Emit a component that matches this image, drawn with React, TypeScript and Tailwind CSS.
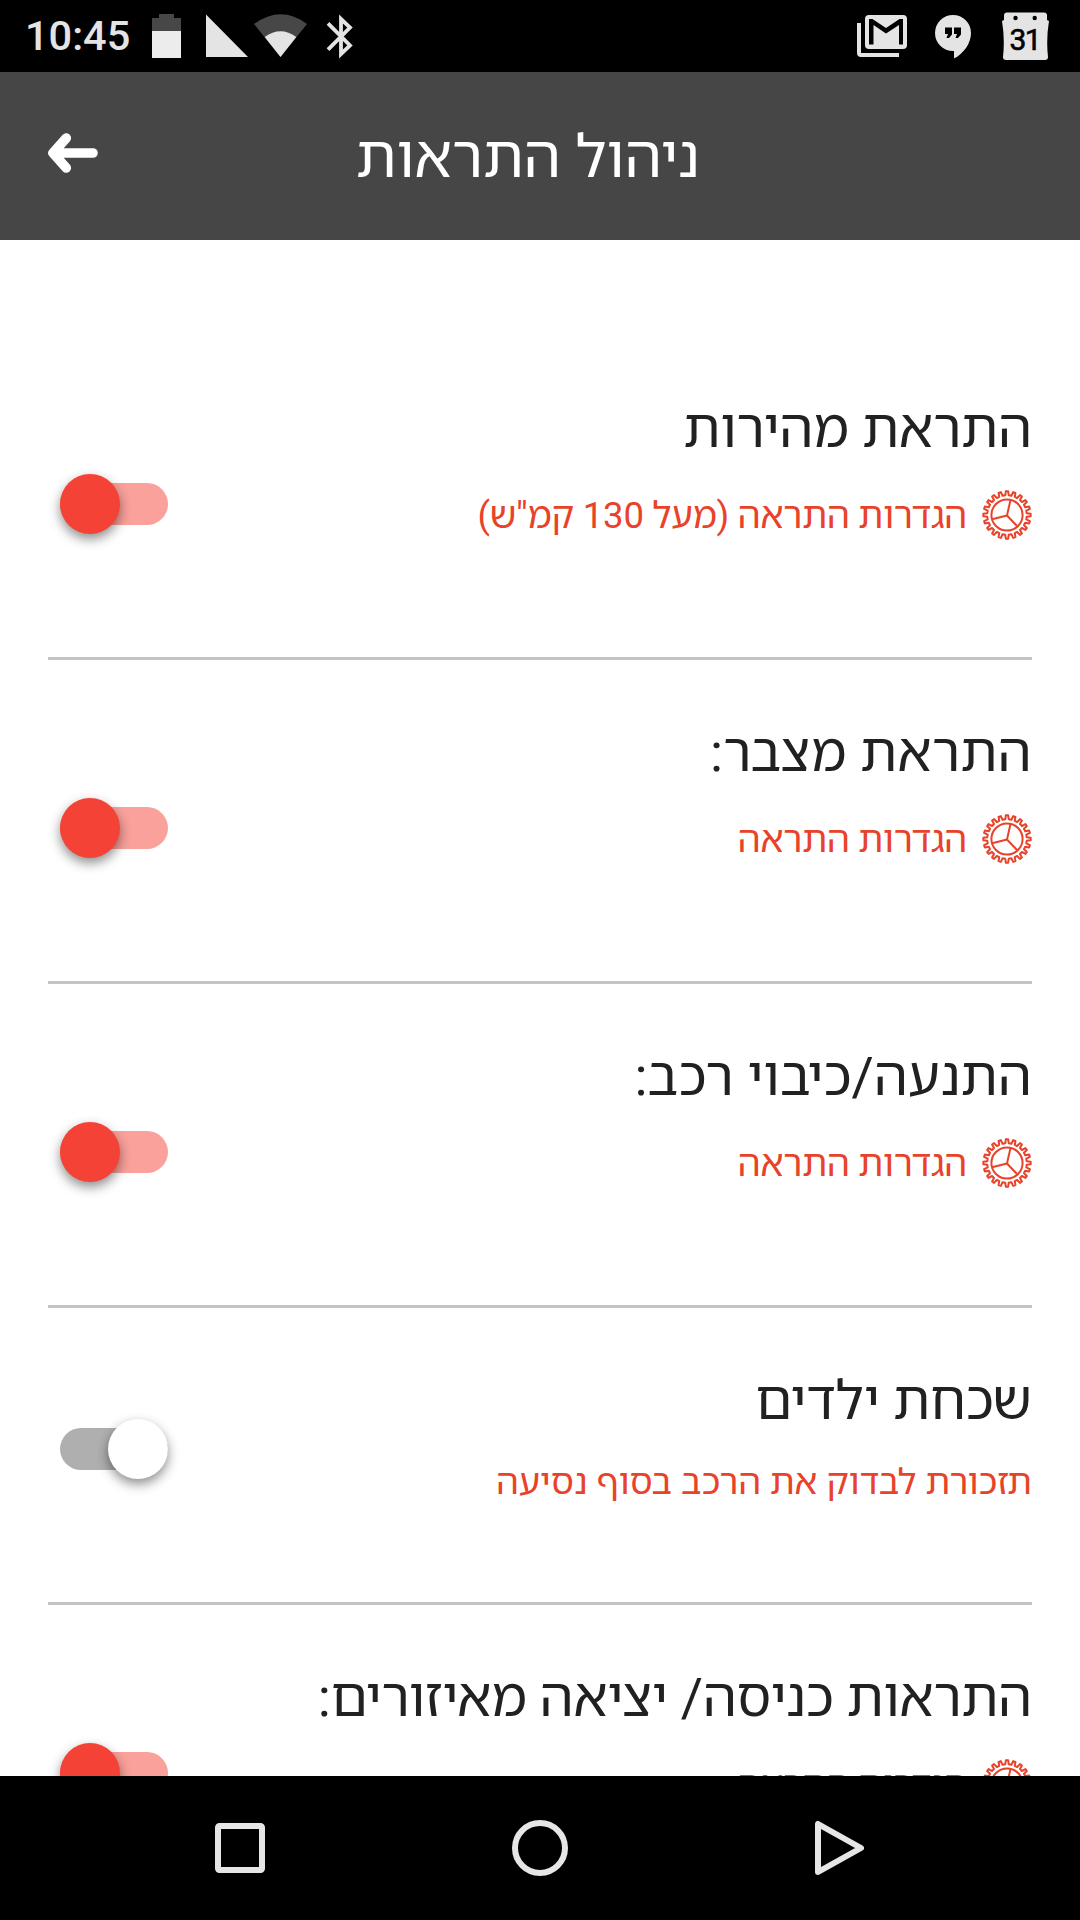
import { useState } from 'react';

interface Alert {
  id: string;
  title: string;
  subtitle: string;
  hasSettings: boolean;
  enabled: boolean;
  tracking: string;
}

const initialAlerts: Alert[] = [
  { id: 'speed', title: 'התראת מהירות', subtitle: 'הגדרות התראה (מעל 130 קמ"ש)', hasSettings: true, enabled: true, tracking: 'tracking-[-0.08px]' },
  { id: 'battery', title: 'התראת מצבר:', subtitle: 'הגדרות התראה', hasSettings: true, enabled: true, tracking: 'tracking-[0.3px]' },
  { id: 'ignition', title: 'התנעה/כיבוי רכב:', subtitle: 'הגדרות התראה', hasSettings: true, enabled: true, tracking: 'tracking-[0.15px]' },
  { id: 'children', title: 'שכחת ילדים', subtitle: 'תזכורת לבדוק את הרכב בסוף נסיעה', hasSettings: false, enabled: false, tracking: 'tracking-normal' },
  { id: 'zones', title: 'התראות כניסה/ יציאה מאיזורים:', subtitle: 'הגדרות התראה', hasSettings: true, enabled: true, tracking: 'tracking-[-0.2px]' },
];

// Outline of the cog: each tooth is a short run on the outer radius
const TEETH = 20;
const gearPoints = Array.from({ length: TEETH }, (_, i) => {
  const step = (Math.PI * 2) / TEETH;
  const a = i * step - Math.PI / 2;
  return [
    [-0.28, 19.8],
    [-0.16, 23.7],
    [0.16, 23.7],
    [0.28, 19.8],
  ]
    .map(([t, r]) => `${(25 + r * Math.cos(a + t * step)).toFixed(2)},${(25 + r * Math.sin(a + t * step)).toFixed(2)}`)
    .join(' ');
}).join(' ');

function GearIcon() {
  return (
    <svg className="w-[50px] h-[50px] shrink-0" viewBox="0 0 50 50" fill="none" stroke="#e8432a" strokeWidth="2">
      <polygon points={gearPoints} strokeLinejoin="round" />
      <circle cx="25" cy="25" r="15.6" />
      <path d="M25 25.5L28.5 10M25 25.5L10 29.3M25 25.5L35.5 36.5" />
    </svg>
  );
}

function StatusBar() {
  return (
    <div className="h-[72px] shrink-0 bg-black flex items-center justify-between">
      <div className="flex items-center pl-[25px] h-full">
        <span className="w-[127px] text-[41.5px] leading-[72px] font-medium text-[#e4e4e4]">10:45</span>
        <svg className="w-[29px] h-[72px]" viewBox="0 0 29 72">
          <path d="M7 14h15v4h7v14H0V18h7z" fill="#474747" />
          <path d="M0 31h29v27H0z" fill="#ececec" />
        </svg>
        <svg className="w-[42px] h-[72px] ml-[25px]" viewBox="0 0 42 72">
          <path d="M0 14.5V57h42z" fill="#e4e4e4" />
        </svg>
        <svg className="w-[54px] h-[72px] ml-[6px]" viewBox="0 0 54 72">
          <path d="M0 24Q27 4.500 53 24L26.500 57z" fill="#474747" />
          <path d="M10.700 37Q26.500 25.500 42.300 37L26.500 57z" fill="#e4e4e4" />
        </svg>
        <svg className="w-[28px] h-[72px] ml-[18px]" viewBox="0 0 28 72" fill="none" stroke="#e4e4e4" strokeWidth="3.800">
          <path d="M2 23.300L24 45.500L15 54V19L24 27.500L2 49.700" />
        </svg>
      </div>
      <div className="flex items-center pr-[31px] h-full">
        <svg className="w-[50px] h-[72px]" viewBox="0 0 50 72">
          <rect x="8" y="15" width="42" height="34" rx="4" fill="#e4e4e4" />
          <path d="M12 44.500V19H15.500L29 28L42.500 19H46V44.500H42V25L29 33.500L16.500 25V44.500z" fill="#000" />
          <path d="M2 23V53a2 2 0 0 0 2 2H42" fill="none" stroke="#e4e4e4" strokeWidth="4" />
        </svg>
        <svg className="w-[36px] h-[72px] ml-[28px]" viewBox="0 0 36 72">
          <path d="M18 15a18 18 0 0 0 0 36h1v7.500C29 53.500 36 43 36 33a18 18 0 0 0-18-18z" fill="#e4e4e4" />
          <path d="M10 27.500h7v7l-3 3.500h-2.500l1.500-4h-3zM19 27.500h7v7l-3 3.500h-2.500l1.500-4h-3z" fill="#000" />
        </svg>
        <svg className="w-[47px] h-[72px] ml-[31px]" viewBox="0 0 47 72">
          <path d="M5 12.500h37a3 3 0 0 1 3 3v4.500l2 1Q44 39 46 57a3 3 0 0 1-3 3H4a3 3 0 0 1-3-3Q3 39 0 21l2-1v-4.500a3 3 0 0 1 3-3z" fill="#e4e4e4" />
          <circle cx="13.500" cy="18" r="2.200" fill="#000" />
          <circle cx="32.700" cy="18" r="2.200" fill="#000" />
          <text x="22.800" y="50.300" textAnchor="middle" fontSize="30" fontWeight="400" letterSpacing="-1.5" fill="#000" stroke="#000" strokeWidth="0.6">
            31
          </text>
        </svg>
      </div>
    </div>
  );
}

function Switch({ on, onToggle }: { on: boolean; onToggle: () => void }) {
  return (
    <button
      type="button"
      role="switch"
      aria-checked={on}
      onClick={onToggle}
      className="w-[108px] h-[60px] flex items-center"
    >
      <span
        className={`w-[108px] h-[42px] rounded-full flex items-center ${
          on ? 'bg-[#faa19b] justify-end' : 'bg-[#afafaf] justify-start'
        }`}
      >
        <span
          className={`w-[60px] h-[60px] shrink-0 rounded-full shadow-[0_5px_12px_rgba(0,0,0,0.45)] ${
            on ? 'bg-[#f44336]' : 'bg-white'
          }`}
        />
      </span>
    </button>
  );
}

function AlertRow({ alert, onToggle }: { alert: Alert; onToggle: () => void }) {
  return (
    <div
      className={`mx-12 shrink-0 flex justify-between border-b-[3px] border-[#c3c3c3] ${
        alert.hasSettings ? 'h-[324px]' : 'h-[297px]'
      }`}
    >
      <div>
        <h2 className={`mt-[57px] text-[54px] leading-[72px] text-[#212121] whitespace-nowrap ${alert.tracking}`}>
          {alert.title}
        </h2>
        {alert.hasSettings ? (
          <div className="mt-[25px] flex items-center gap-[15px] text-[36.5px] tracking-[-0.24px] text-[#e8432a]">
            <GearIcon />
            <span className="pt-0.5 leading-[48px] whitespace-nowrap">{alert.subtitle}</span>
          </div>
        ) : (
          <p className="mt-[20px] text-[36px] leading-[50px] text-[#e8432a] whitespace-nowrap">{alert.subtitle}</p>
        )}
      </div>
      <div className={alert.hasSettings ? 'ml-3 mt-[138px]' : 'ml-3 mt-[111px]'}>
        <Switch on={alert.enabled} onToggle={onToggle} />
      </div>
    </div>
  );
}

export default function App() {
  const [alerts, setAlerts] = useState(initialAlerts);

  const toggle = (id: string) => {
    setAlerts(alerts.map((a) => (a.id === id ? { ...a, enabled: !a.enabled } : a)));
  };

  return (
    <div className="w-[1080px] h-[1920px] overflow-hidden flex flex-col bg-white font-[Roboto,'Noto_Sans_Hebrew','Open_Sans',sans-serif]">
      <StatusBar />

      <header className="h-[168px] shrink-0 bg-[#464646] flex items-center">
        <button type="button" className="ml-12 w-[50px] pb-1.5">
          <svg
            className="w-[50px] h-[40px]"
            viewBox="0 0 50 40"
            fill="none"
            stroke="#fff"
            strokeWidth="9.600"
            strokeLinecap="round"
            strokeLinejoin="round"
          >
            <path d="M18.300 5L5 20L18.300 35M5 20H45" />
          </svg>
        </button>
        <h1 dir="rtl" className="ml-[258px] pt-0.5 text-[59.4px] leading-[80px] text-white whitespace-nowrap">
          ניהול התראות
        </h1>
      </header>

      <main dir="rtl" className="flex-1 min-h-0 overflow-hidden flex flex-col pt-[96px]">
        {alerts.map((alert) => (
          <AlertRow key={alert.id} alert={alert} onToggle={() => toggle(alert.id)} />
        ))}
      </main>

      <nav className="h-[144px] shrink-0 bg-black flex items-center justify-center gap-[244px]">
        <svg className="w-[56px] h-[56px]" viewBox="0 0 56 56" fill="none" stroke="#e6e6e6" strokeWidth="6">
          <rect x="6" y="6" width="44" height="44" rx="1.500" />
        </svg>
        <svg className="w-[56px] h-[56px]" viewBox="0 0 56 56" fill="none" stroke="#e6e6e6" strokeWidth="6">
          <circle cx="28" cy="28" r="25" />
        </svg>
        <svg className="w-[56px] h-[56px]" viewBox="0 0 56 56" fill="none" stroke="#e6e6e6" strokeWidth="6" strokeLinejoin="round">
          <path d="M6 4V52L49 28z" />
        </svg>
      </nav>
    </div>
  );
}
